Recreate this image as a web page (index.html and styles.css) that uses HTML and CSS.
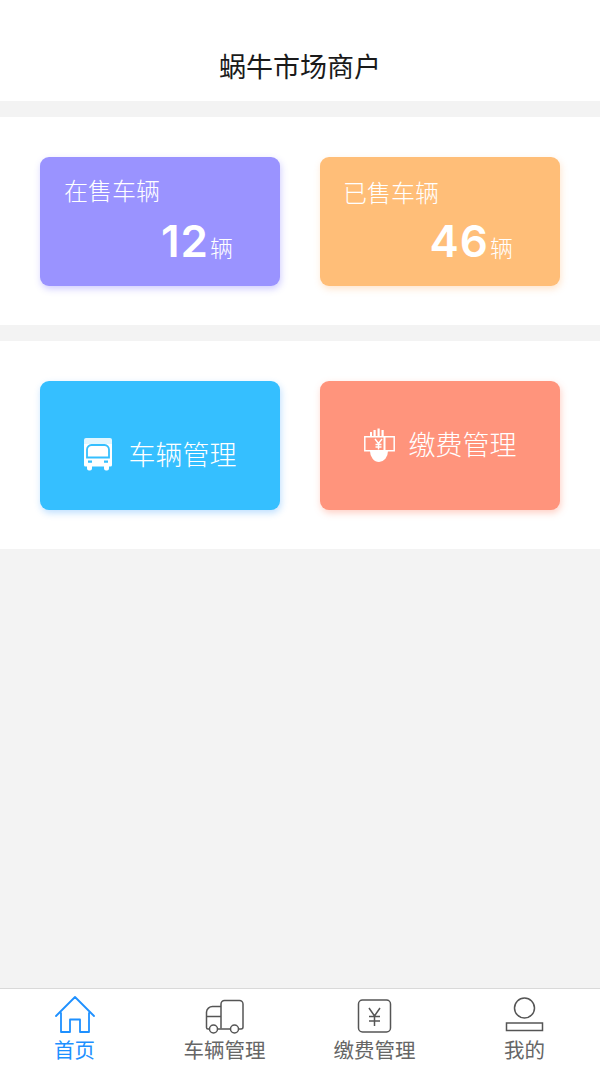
FILE: index.html
```html
<!DOCTYPE html>
<html lang="zh">
<head>
<meta charset="utf-8">
<title>蜗牛市场商户</title>
<link rel="stylesheet" href="styles.css">
</head>
<body>
<div class="app">
  <header class="header">蜗牛市场商户</header>
  <section class="panel">
    <div class="card purple">
      <div class="card-title">在售车辆</div>
      <div class="count count-a"><span class="num">12</span><span class="unit">辆</span></div>
    </div>
    <div class="card orange">
      <div class="card-title title-b">已售车辆</div>
      <div class="count count-b"><span class="num">46</span><span class="unit">辆</span></div>
    </div>
  </section>
  <section class="panel">
    <div class="card blue action action-a">
      <svg class="action-icon" width="28" height="33" viewBox="0 0 28 33">
        <path fill="#fff" opacity=".85" d="M2 0h24a2 2 0 0 1 2 2v6H0V2a2 2 0 0 1 2-2z"/>
        <path fill="#fff" d="M0 6h28v21a1.500 1.500 0 0 1-1.500 1.500h-25A1.500 1.500 0 0 1 0 27z"/>
        <path fill="#fff" stroke="#35bfff" stroke-width="1.800" d="M3 19.500V11.500A4.500 4.500 0 0 1 7.500 7h13A4.500 4.500 0 0 1 25 11.500v8z"/>
        <path fill="#fff" d="M3 28h5v2.500a2 2 0 0 1-2 2H5a2 2 0 0 1-2-2zM20 28h5v2.500a2 2 0 0 1-2 2h-1a2 2 0 0 1-2-2z"/>
        <path fill="#35bfff" d="M4 22.500h4v2.300H4zM20 22.500h4v2.300h-4z"/>
      </svg>
      <span class="action-text">车辆管理</span>
    </div>
    <div class="card coral action action-b">
      <svg class="action-icon" width="31" height="34" viewBox="0 0 31 34">
        <path fill="none" stroke="#fff" stroke-width="1.500" d="M.8 8.800h29.400v14H.8z"/>
        <path fill="#fff" d="M6 8V4h2v4zM9.500 8V2h2.200v6zM13.500 8V.5h2.200V8zM17.500 8V2h2.200v6zM19.500 8h2v15h-2z"/>
        <path fill="#fff" d="M6 23h18a9 11 0 0 1-18 0z"/>
        <path fill="none" stroke="#fff" stroke-width="1.400" d="M11 11l3.500 4.500L18 11M14.500 15.500v6M11.500 16.500h6M11.500 19h6"/>
      </svg>
      <span class="action-text">缴费管理</span>
    </div>
  </section>
  <main class="filler"></main>
  <nav class="tabbar">
    <div class="tab active">
      <svg class="tab-icon" width="40" height="38" viewBox="0 0 40 38">
        <path fill="none" stroke="#1e90ff" stroke-width="1.800" stroke-linejoin="round" stroke-linecap="round" d="M1 20L20 1l19 19M6 17v19h9V23.500h10V36h9V17"/>
      </svg>
      <span class="tab-label">首页</span>
    </div>
    <div class="tab">
      <svg class="tab-icon" width="40" height="38" viewBox="0 0 40 38">
        <g fill="none" stroke="#555" stroke-width="1.500">
          <path d="M16 32.500V8A3.500 3.500 0 0 1 19.500 4.500h15A3.500 3.500 0 0 1 38 8V31a2 2 0 0 1-2 2h-2"/>
          <path d="M25 33H13M4 33H3a1.500 1.500 0 0 1-1.500-1.500V16A6 6 0 0 1 7.500 10.500H16M2 20.500h14"/>
          <circle cx="8.500" cy="33" r="4"/>
          <circle cx="29.500" cy="33" r="4"/>
        </g>
      </svg>
      <span class="tab-label">车辆管理</span>
    </div>
    <div class="tab">
      <svg class="tab-icon" width="40" height="38" viewBox="0 0 40 38">
        <g fill="none" stroke="#555" stroke-width="1.500">
          <rect x="3.500" y="4" width="32" height="32" rx="4"/>
          <path d="M14 12l5.500 8 5.500-8M19.500 20v10M14 20.500h11M14 25h11"/>
        </g>
      </svg>
      <span class="tab-label">缴费管理</span>
    </div>
    <div class="tab">
      <svg class="tab-icon" width="40" height="38" viewBox="0 0 40 38">
        <g fill="none" stroke="#555" stroke-width="1.500">
          <circle cx="19.500" cy="12" r="10"/>
          <rect x="1.500" y="27" width="36" height="7.500"/>
        </g>
      </svg>
      <span class="tab-label">我的</span>
    </div>
  </nav>
</div>
</body>
</html>
```
FILE: styles.css
```css
* { box-sizing: border-box; }
html, body { margin: 0; padding: 0; }
body { font-family: "Noto Sans CJK SC", "Liberation Sans", sans-serif; }
.app {
  width: 600px;
  height: 1067px;
  display: flex;
  flex-direction: column;
  background: #f3f3f3;
  overflow: hidden;
}
.header {
  height: 101px;
  padding-top: 47px;
  background: #fff;
  text-align: center;
  font-size: 27px;
  line-height: 38px;
  color: #1a1a1a;
}
.panel {
  margin-top: 16px;
  height: 208px;
  padding: 40px;
  display: flex;
  justify-content: space-between;
  background: #fff;
}
.card {
  position: relative;
  width: 240px;
  height: 129px;
  border-radius: 9px;
  color: #fff;
}
.purple { background: #9a93ff; box-shadow: 1px 3px 7px rgba(100, 90, 255, 0.3); }
.orange { background: #ffbe78; box-shadow: 1px 3px 7px rgba(255, 170, 90, 0.3); }
.blue { background: #35bfff; box-shadow: 1px 3px 7px rgba(40, 150, 255, 0.3); }
.coral { background: #ff947c; box-shadow: 1px 3px 7px rgba(255, 120, 90, 0.35); }
.card-title {
  padding: 15px 0 0 24px;
  font-size: 24px;
  line-height: 36px;
  font-weight: 300;
}
.title-b { padding: 17px 0 0 23px; }
.count {
  display: flex;
  justify-content: flex-end;
  align-items: baseline;
  padding-right: 47px;
  height: 50px;
  line-height: 50px;
}
.count-a { margin-top: 8px; }
.count-b { margin-top: 6px; }
.num {
  font-family: Inter, "Liberation Sans", sans-serif;
  font-size: 44px;
  font-weight: 600;
  letter-spacing: 1px;
}
.unit { font-size: 23px; font-weight: 300; margin-left: 1px; }
.action {
  display: flex;
  align-items: center;
  justify-content: center;
}
.action-a { padding: 17px 0 0 0; gap: 17px; }
.action-b { padding: 0 0 3px 0; gap: 14px; }
.action-b .action-icon { margin-top: 2px; }
.action-icon { flex: none; }
.action-text { font-size: 27px; line-height: 38px; font-weight: 300; }
.filler { flex: 1; }
.tabbar {
  height: 79px;
  flex: none;
  display: flex;
  background: #fff;
  border-top: 1px solid #d9d9d9;
}
.tab {
  flex: 1;
  display: flex;
  flex-direction: column;
  align-items: center;
  color: #666;
}
.tab-icon { margin-top: 7px; flex: none; }
.tab-label { font-size: 20.500px; line-height: 28px; margin: 1px 1px 0 0; }
.tab.active { color: #1e90ff; }
```
